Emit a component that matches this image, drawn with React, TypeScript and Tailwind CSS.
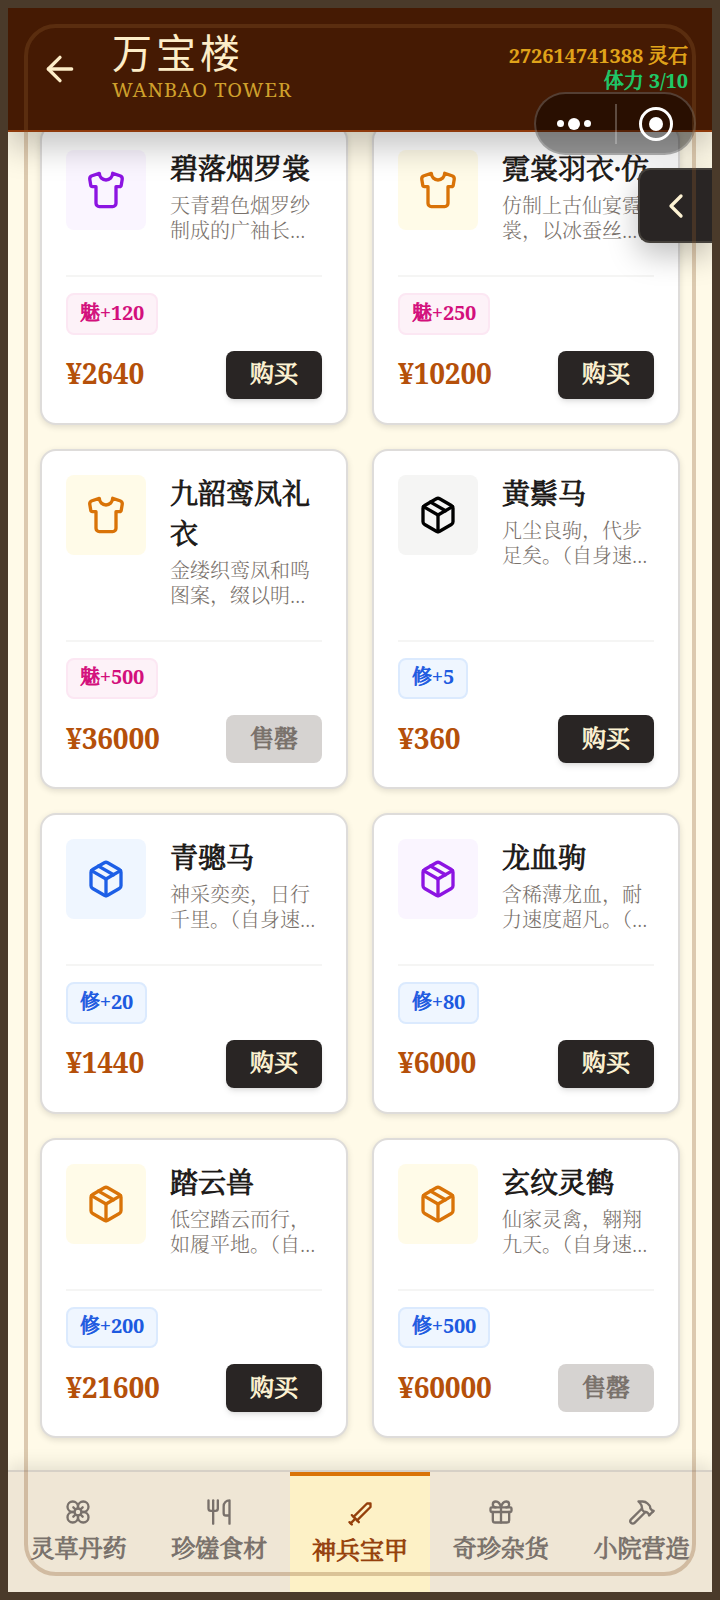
import {
  ArrowLeft,
  ChevronLeft,
  Flower,
  Gift,
  Hammer,
  Package,
  Shirt,
  Sword,
  Utensils,
} from "lucide-react";

const tones = {
  purple: "bg-purple-50 text-[#8c14e2]",
  amber: "bg-[#fffbe8] text-[#d97308]",
  blue: "bg-blue-50 text-[#1d5fe6]",
  plain: "bg-stone-100 text-black",
};

type Product = {
  name: string;
  description: string;
  icon: typeof Shirt;
  tone: keyof typeof tones;
  stat: string;
  bonus: number;
  price: number;
  soldOut?: boolean;
};

const products: Product[] = [
  { name: "碧落烟罗裳", description: "天青碧色烟罗纱制成的广袖长裙\uff0c飘逸如云", icon: Shirt, tone: "purple", stat: "魅", bonus: 120, price: 2640 },
  { name: "霓裳羽衣·仿", description: "仿制上古仙宴霓裳\uff0c以冰蚕丝织就而成", icon: Shirt, tone: "amber", stat: "魅", bonus: 250, price: 10200 },
  { name: "九韶鸾凤礼衣", description: "金缕织鸾凤和鸣图案\uff0c缀以明珠美玉", icon: Shirt, tone: "amber", stat: "魅", bonus: 500, price: 36000, soldOut: true },
  { name: "黄鬃马", description: "凡尘良驹\uff0c代步足矣。\uff08自身速度+5\uff09", icon: Package, tone: "plain", stat: "修", bonus: 5, price: 360 },
  { name: "青骢马", description: "神采奕奕\uff0c日行千里。\uff08自身速度+20\uff09", icon: Package, tone: "blue", stat: "修", bonus: 20, price: 1440 },
  { name: "龙血驹", description: "含稀薄龙血\uff0c耐力速度超凡。\uff08自身速度+80\uff09", icon: Package, tone: "purple", stat: "修", bonus: 80, price: 6000 },
  { name: "踏云兽", description: "低空踏云而行\uff0c如履平地。\uff08自身速度+200\uff09", icon: Package, tone: "amber", stat: "修", bonus: 200, price: 21600 },
  { name: "玄纹灵鹤", description: "仙家灵禽\uff0c翱翔九天。\uff08自身速度+500\uff09", icon: Package, tone: "amber", stat: "修", bonus: 500, price: 60000, soldOut: true },
];

const tabs = [
  { label: "灵草丹药", icon: Flower },
  { label: "珍馐食材", icon: Utensils },
  { label: "神兵宝甲", icon: Sword, active: true },
  { label: "奇珍杂货", icon: Gift },
  { label: "小院营造", icon: Hammer },
];

// Even-stroked bold for Chinese glyphs
const heavy = "font-normal [-webkit-text-stroke:0.9px_currentColor]";

function ProductCard({ product }: { product: Product }) {
  const Icon = product.icon;
  return (
    <div className="flex flex-col rounded-2xl border-2 border-stone-300/80 bg-white p-6 shadow-[0_2px_6px_rgba(0,0,0,0.12)]">
      <div className="flex gap-6 pb-8">
        <div className={`flex h-20 w-20 shrink-0 items-center justify-center rounded-lg ${tones[product.tone]}`}>
          <Icon size={40} />
        </div>
        <div className="-mt-0.5 min-w-0 flex-1">
          <h3 className={`mb-[5px] text-[28px] leading-10 text-stone-900 ${heavy}`}>{product.name}</h3>
          <p className="line-clamp-2 text-xl leading-[25px] font-light text-stone-500">{product.description}</p>
        </div>
      </div>
      <div className="mt-auto border-t-2 border-stone-100 pt-4">
        <div className="mb-4 flex">
          <span
            className={`flex h-[41.5px] items-center rounded-lg border-2 px-3 pb-0.5 text-xl font-bold tracking-[-0.2px] ${
              product.stat === "魅"
                ? "border-pink-100 bg-pink-50 text-[#d3107c]"
                : "border-blue-100 bg-blue-50 text-[#1d5ae0]"
            }`}
          >
            <span className={heavy}>{product.stat}</span>+{product.bonus}
          </span>
        </div>
        <div className="flex h-12 items-center justify-between">
          <span className="pb-[3px] text-[28px] font-bold tracking-[-0.2px] text-[#b5500a]">¥{product.price}</span>
          <button
            className={`h-12 w-24 rounded-lg pb-[3px] text-2xl leading-8 ${heavy} ${
              product.soldOut ? "bg-stone-300 text-stone-500" : "bg-stone-800 text-[#fdf3d3] shadow-md"
            }`}
          >
            {product.soldOut ? "售罄" : "购买"}
          </button>
        </div>
      </div>
    </div>
  );
}

export default function App() {
  return (
    <div className="relative flex h-[1600px] w-[720px] flex-col overflow-hidden border-8 border-[#4a3a2a] bg-[#fffae8] font-['Noto_Serif','Noto_Serif_CJK_SC','Liberation_Serif','Noto_Sans_CJK_SC',serif]">
      {/* Header */}
      <header className="relative z-10 flex h-[124px] shrink-0 border-b-2 border-[#8f3a0c] bg-[#451a03] pr-6 pl-8 shadow-[0_16px_30px_rgba(0,0,0,0.22)]">
        <div className="flex h-[122px] w-[72px] items-center">
          <ArrowLeft size={40} className="text-[#fdedc8]" />
        </div>
        <div className="pt-[18px]">
          <h1 className="font-['Noto_Sans_CJK_SC',sans-serif] text-[40px] leading-[50px] tracking-[4px] text-[#fdedc8]">万宝楼</h1>
          <p className="mt-px text-xl leading-[25px] tracking-[1px] text-[#cfa02c]">WANBAO TOWER</p>
        </div>
        <div className="ml-auto pt-[35px] text-right text-xl leading-[25px] font-bold tracking-[-0.1px]">
          <p className="text-[#e0a31a]">
            272614741388 <span className={heavy}>灵石</span>
          </p>
          <p className="text-[#1fc968]">
            <span className={heavy}>体力</span> 3/10
          </p>
        </div>
      </header>

      {/* Product grid, scrolled so the first row sits under the header */}
      <main className="min-h-0 flex-1 overflow-hidden px-8">
        <div className="-mt-2 grid grid-cols-2 gap-6">
          {products.map((product) => (
            <ProductCard key={product.name} product={product} />
          ))}
        </div>
      </main>

      {/* Bottom tabs */}
      <nav className="relative z-10 grid h-[122px] shrink-0 grid-cols-5 border-t-2 border-[#d6d0c6] bg-[#efe6d5] shadow-[0_-6px_16px_rgba(0,0,0,0.1)]">
        {tabs.map((tab) => (
          <div
            key={tab.label}
            className={`flex flex-col items-center whitespace-nowrap ${
              tab.active ? "border-t-4 border-[#d97308] bg-[#fdf1c6] pt-6 text-[#95400c]" : "pt-[26px] text-stone-500"
            }`}
          >
            <tab.icon size={28} />
            <span className={`mt-1.5 text-2xl leading-8 ${heavy}`}>{tab.label}</span>
          </div>
        ))}
      </nav>

      {/* Side drawer handle */}
      <div className="absolute top-[160px] right-0 z-20 flex h-[75px] w-[74px] items-center justify-center rounded-l-xl border-2 border-r-0 border-stone-700 bg-stone-800 shadow-[0_12px_30px_rgba(0,0,0,0.25)]">
        <ChevronLeft size={40} className="text-[#fdf3d3]" />
      </div>

      {/* Mini program capsule */}
      <div className="absolute top-[84px] right-4 z-20 flex h-[63px] w-[162px] items-center rounded-full border-2 border-white/20 bg-black/40">
        <div className="flex flex-1 items-center justify-center gap-1 pr-[3px]">
          <span className="h-[7px] w-[7px] rounded-full bg-white" />
          <span className="h-3 w-3 rounded-full bg-white" />
          <span className="h-[7px] w-[7px] rounded-full bg-white" />
        </div>
        <div className="h-10 w-0.5 bg-white/25" />
        <div className="flex flex-1 items-center justify-center pl-px">
          <span className="flex h-[34px] w-[34px] items-center justify-center rounded-full border-[3px] border-white">
            <span className="h-[14px] w-[14px] rounded-full bg-white" />
          </span>
        </div>
      </div>

      {/* Decorative frame */}
      <div className="pointer-events-none absolute inset-4 z-30 rounded-[32px] border-4 border-[#8b5a2b]/30" />
    </div>
  );
}
